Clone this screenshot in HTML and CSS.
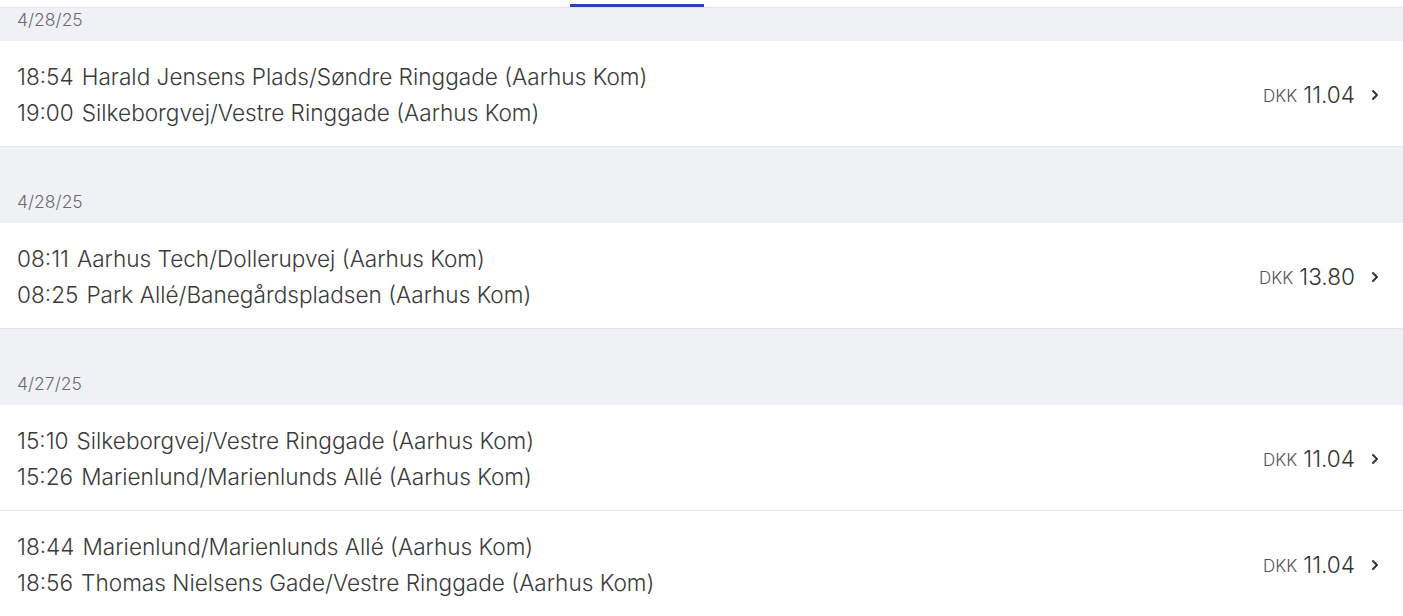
FILE: index.html
```html
<!DOCTYPE html>
<html lang="da">
<head>
<meta charset="utf-8">
<title>Rejser</title>
<link rel="stylesheet" href="styles.css">
</head>
<body>
<div class="page">
  <header class="tabs">
    <div class="tab-indicator"></div>
  </header>
  <main class="list">
    <div class="date date--clipped">4/28/25</div>
    <a class="trip">
      <div class="stops">
        <div class="stop"><span class="time">18:54</span><span class="place">Harald Jensens Plads/Søndre Ringgade (Aarhus Kom)</span></div>
        <div class="stop"><span class="time">19:00</span><span class="place">Silkeborgvej/Vestre Ringgade (Aarhus Kom)</span></div>
      </div>
      <div class="price"><span class="cur">DKK</span><span class="amount">11.04</span>
        <svg class="chev" viewBox="0 0 12 12" width="12" height="12"><path d="M4 2l4 4-4 4" fill="none" stroke="currentColor" stroke-width="2" stroke-linecap="round" stroke-linejoin="round"/></svg>
      </div>
    </a>
    <div class="date">4/28/25</div>
    <a class="trip">
      <div class="stops">
        <div class="stop"><span class="time">08:11</span><span class="place">Aarhus Tech/Dollerupvej (Aarhus Kom)</span></div>
        <div class="stop"><span class="time">08:25</span><span class="place">Park Allé/Banegårdspladsen (Aarhus Kom)</span></div>
      </div>
      <div class="price"><span class="cur">DKK</span><span class="amount">13.80</span>
        <svg class="chev" viewBox="0 0 12 12" width="12" height="12"><path d="M4 2l4 4-4 4" fill="none" stroke="currentColor" stroke-width="2" stroke-linecap="round" stroke-linejoin="round"/></svg>
      </div>
    </a>
    <div class="date">4/27/25</div>
    <a class="trip">
      <div class="stops">
        <div class="stop"><span class="time">15:10</span><span class="place">Silkeborgvej/Vestre Ringgade (Aarhus Kom)</span></div>
        <div class="stop"><span class="time">15:26</span><span class="place">Marienlund/Marienlunds Allé (Aarhus Kom)</span></div>
      </div>
      <div class="price"><span class="cur">DKK</span><span class="amount">11.04</span>
        <svg class="chev" viewBox="0 0 12 12" width="12" height="12"><path d="M4 2l4 4-4 4" fill="none" stroke="currentColor" stroke-width="2" stroke-linecap="round" stroke-linejoin="round"/></svg>
      </div>
    </a>
    <a class="trip">
      <div class="stops">
        <div class="stop"><span class="time">18:44</span><span class="place">Marienlund/Marienlunds Allé (Aarhus Kom)</span></div>
        <div class="stop"><span class="time">18:56</span><span class="place">Thomas Nielsens Gade/Vestre Ringgade (Aarhus Kom)</span></div>
      </div>
      <div class="price"><span class="cur">DKK</span><span class="amount">11.04</span>
        <svg class="chev" viewBox="0 0 12 12" width="12" height="12"><path d="M4 2l4 4-4 4" fill="none" stroke="currentColor" stroke-width="2" stroke-linecap="round" stroke-linejoin="round"/></svg>
      </div>
    </a>
  </main>
</div>
</body>
</html>
```
FILE: styles.css
```css
* { box-sizing: border-box; }
html, body { margin: 0; padding: 0; }
body {
  background: #f0f1f5;
  font-family: Inter, "Noto Sans", sans-serif;
  font-weight: 300;
  color: #3a3a3a;
  height: 616px;
  overflow: hidden;
}
.tabs {
  height: 8px;
  background: #ffffff;
  border-bottom: 1px solid #e2e3e8;
  display: flex;
  align-items: flex-end;
  padding-left: 570px;
}
.tab-indicator {
  width: 134px;
  height: 3px;
  background: #2b3fc1;
}
.list { display: flex; flex-direction: column; }
.date {
  height: 76px;
  display: flex;
  align-items: flex-end;
  padding: 0 17px 12px;
  font-size: 17.5px;
  line-height: 19px;
  color: #6b6b6e;
}
.date--clipped { height: 33px; }
.trip {
  display: flex;
  align-items: center;
  justify-content: space-between;
  background: #ffffff;
  border-bottom: 1px solid #e4e5ea;
  height: 106px;
  padding: 2px 22px 0 17px;
}
.stops { display: flex; flex-direction: column; }
.stop {
  font-size: 22.6px;
  line-height: 36px;
  white-space: nowrap;
}
.time { margin-right: 8px; }
.price {
  display: flex;
  align-items: center;
  color: #333;
}
.cur {
  font-size: 17px;
  color: #555;
  margin-right: 6px;
  margin-top: 3px;
}
.amount { font-size: 22.6px; }
.chev { margin-left: 14px; color: #333; }
```
